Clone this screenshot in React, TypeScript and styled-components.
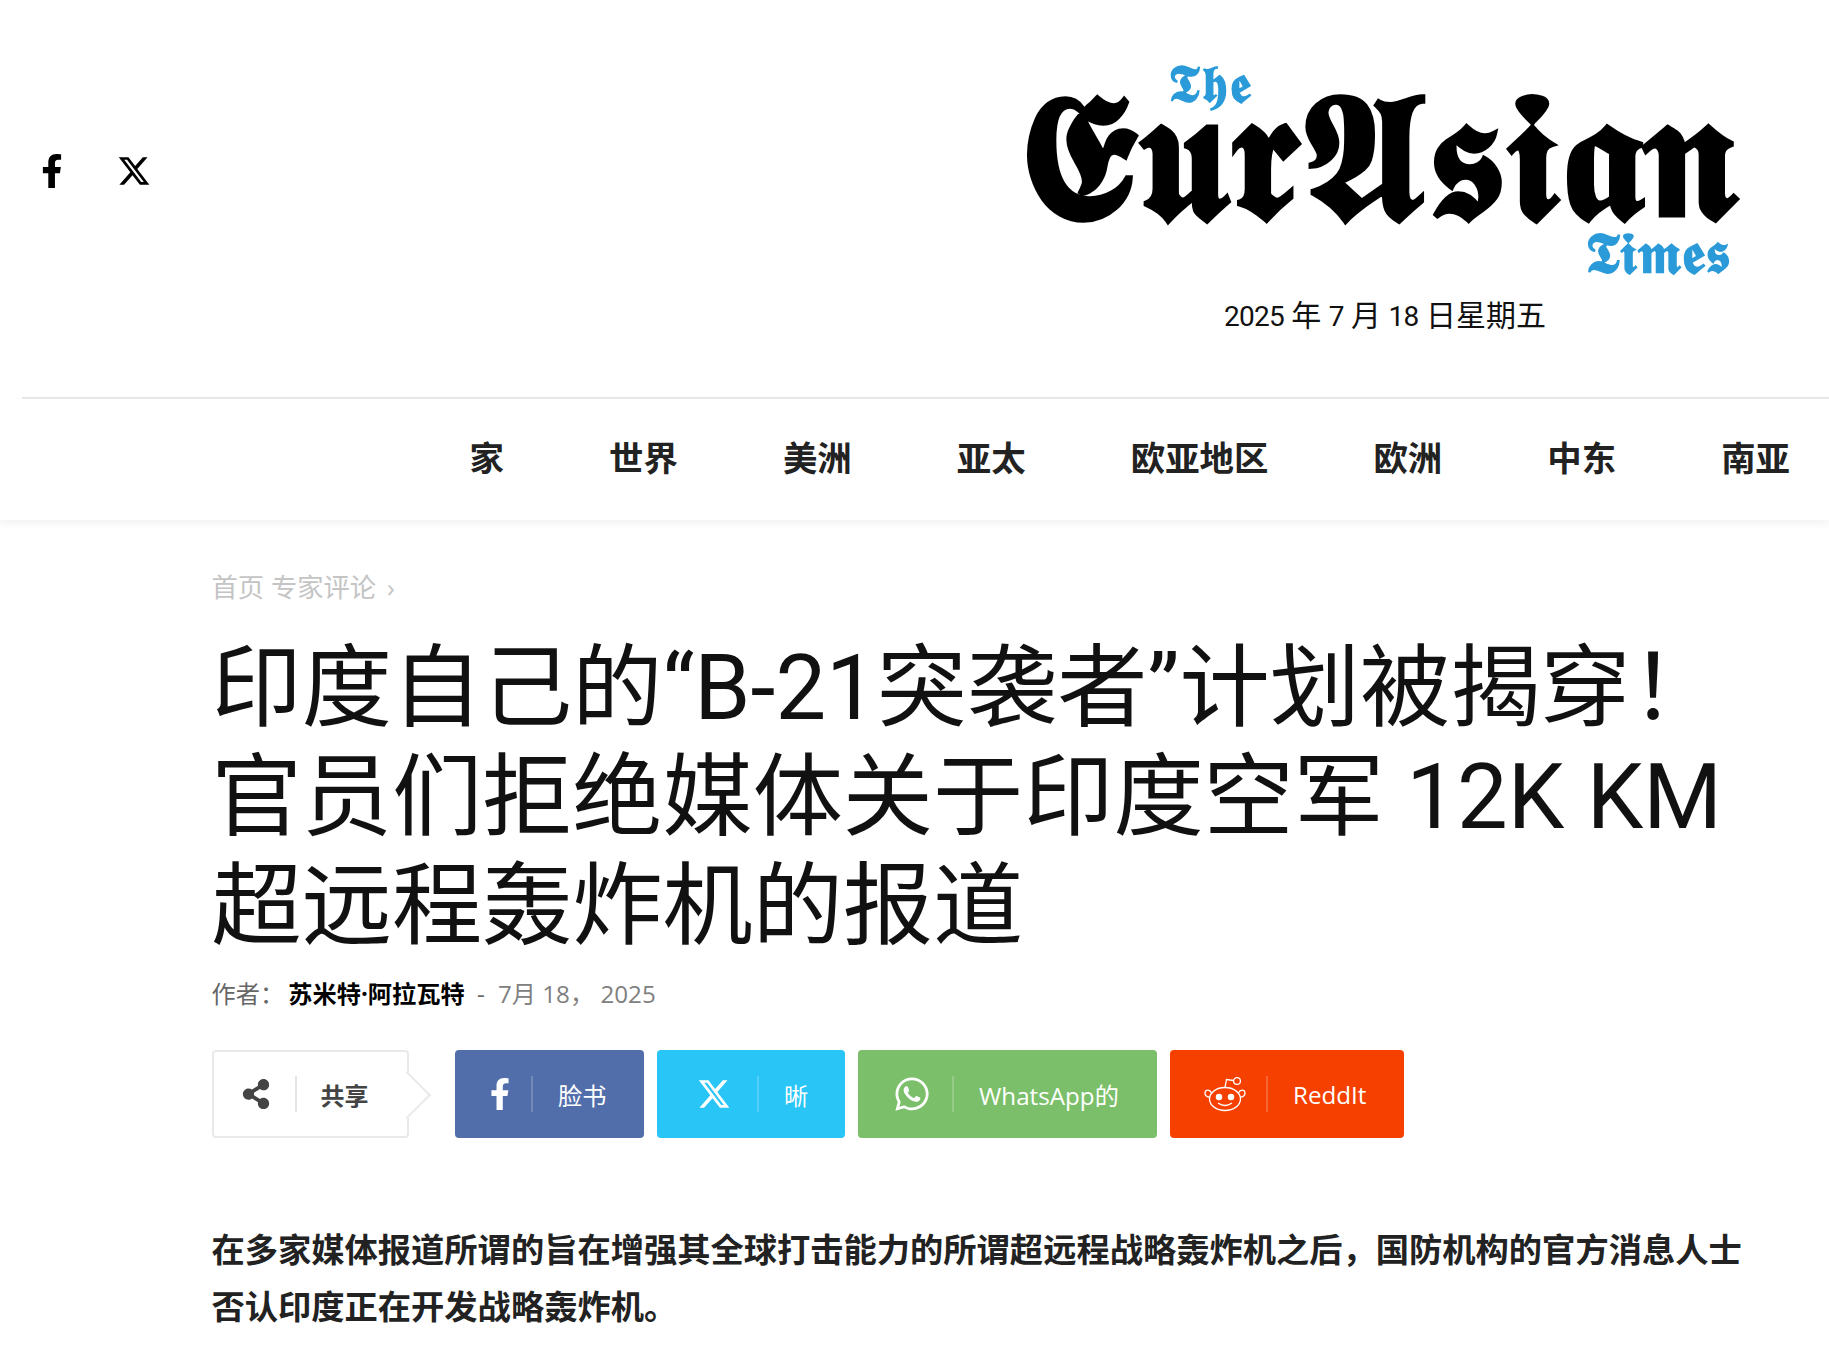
import React from 'react';
import styled, { createGlobalStyle } from 'styled-components';
import { FaFacebookF, FaShareAlt, FaWhatsapp } from 'react-icons/fa';
import { FaXTwitter } from 'react-icons/fa6';

const CJK = '"Noto Sans CJK SC", "Noto Sans CJK TC", sans-serif';

const navItems = ['家', '世界', '美洲', '亚太', '欧亚地区', '欧洲', '中东', '南亚'];

const GlobalStyle = createGlobalStyle`
	html, body {
		margin: 0;
		padding: 0;
		background: #fff;
		overflow-x: hidden;
	}
	* {
		box-sizing: border-box;
	}
`;

const RedditIcon = () => (
	<svg width="42" height="36" viewBox="0 0 42 36" fill="none" stroke="currentColor" strokeWidth="1.3">
		<ellipse cx="21" cy="23" rx="15.5" ry="11.5" />
		<path d="M7.5 17 C6 13.5 1.5 13 1 17 C0.8 19.5 3 21 5.8 21" />
		<path d="M34.5 17 C36 13.5 40.5 13 41 17 C41.2 19.5 39 21 36.2 21" />
		<path d="M21 11.5 L22.5 3.5 L29.5 4.5" />
		<circle cx="33" cy="5" r="3.4" />
		<circle cx="15" cy="21" r="2.6" fill="currentColor" />
		<circle cx="27" cy="21" r="2.6" fill="currentColor" />
		<path d="M14 27 Q21 32 28 27" />
	</svg>
);

export default function App() {
	return (
		<Page>
			<GlobalStyle />
			<Header>
				<Socials>
					<SocialLink><FaFacebookF /></SocialLink>
					<SocialLink><FaXTwitter /></SocialLink>
				</Socials>
				<Masthead>
					<LogoThe>𝕿𝖍𝖊</LogoThe>
					<LogoMain>𝕰𝖚𝖗𝕬𝖘𝖎𝖆𝖓</LogoMain>
					<LogoTimes>𝕿𝖎𝖒𝖊𝖘</LogoTimes>
					<DateLine>
						<Num>2025</Num> 年 <Num>7</Num> 月 <Num>18</Num> 日星期五
					</DateLine>
				</Masthead>
			</Header>
			<Divider />
			<Nav>
				{navItems.map((item) => (
					<NavItem key={item}>{item}</NavItem>
				))}
			</Nav>
			<Article>
				<Breadcrumb>首页 专家评论 <Chevron>›</Chevron></Breadcrumb>
				<Title>印度自己的“B-21突袭者”计划被揭穿！官员们拒绝媒体关于印度空军 12K KM 超远程轰炸机的报道</Title>
				<Meta>
					作者： <Author>苏米特·阿拉瓦特</Author> <Dash>-</Dash> <MetaDate>7月 18， 2025</MetaDate>
				</Meta>
				<ShareRow>
					<ShareLabel>
						<FaShareAlt />
						<ShareRule />
						<span>共享</span>
					</ShareLabel>
					<ShareButton $bg="#516eab" $width={189} $iconWidth={78} $iconSize={32}>
						<IconSlot><FaFacebookF /></IconSlot>
						<ButtonText>脸书</ButtonText>
					</ShareButton>
					<ShareButton $bg="#29c5f6" $width={188} $iconWidth={102} $iconSize={34}>
						<IconSlot><FaXTwitter /></IconSlot>
						<ButtonText>晰</ButtonText>
					</ShareButton>
					<ShareButton $bg="#7bbf6a" $width={299} $iconWidth={96} $iconSize={38}>
						<IconSlot><FaWhatsapp /></IconSlot>
						<ButtonText>WhatsApp的</ButtonText>
					</ShareButton>
					<ShareButton $bg="#f54000" $width={234} $iconWidth={98} $iconSize={36}>
						<IconSlot><RedditIcon /></IconSlot>
						<ButtonText>ReddIt</ButtonText>
					</ShareButton>
				</ShareRow>
				<Lead>在多家媒体报道所谓的旨在增强其全球打击能力的所谓超远程战略轰炸机之后，国防机构的官方消息人士否认印度正在开发战略轰炸机。</Lead>
			</Article>
		</Page>
	);
}

const Page = styled.div`
	width: 1829px;
	height: 1354px;
	overflow: hidden;
	background: #fff;
	font-family: "Open Sans", ${CJK};
	color: #111;
`;

const Header = styled.header`
	display: flex;
	justify-content: space-between;
	height: 397px;
	padding: 60px 90px 0 35px;
`;

const Socials = styled.div`
	display: flex;
	align-items: center;
	gap: 48px;
	height: 222px;
`;

const SocialLink = styled.a`
	display: flex;
	font-size: 34px;
	color: #000;
`;

const Masthead = styled.div`
	display: flex;
	flex-direction: column;
	width: 720px;
`;

const logoFont = '"DejaVu Serif", "DejaVu Sans", "Liberation Serif", serif';

const LogoThe = styled.div`
	margin-left: 149px;
	height: 48px;
	font: 700 52px/48px ${logoFont};
	letter-spacing: 2px;
	color: #2a9bd8;
`;

const LogoMain = styled.div`
	height: 96px;
	font: 700 179px/96px ${logoFont};
	color: #000;
	white-space: nowrap;
`;

const LogoTimes = styled.div`
	align-self: flex-end;
	height: 50px;
	margin: 24px 9px 0 0;
	font: 700 57px/50px ${logoFont};
	color: #2a9bd8;
`;

const DateLine = styled.div`
	margin-top: 18px;
	padding-left: 12px;
	text-align: center;
	font-family: Roboto, ${CJK};
	font-size: 30px;
	line-height: 40px;
	color: #111;
`;

const Num = styled.span`
	font-size: 28px;
	letter-spacing: -0.8px;
`;

const Divider = styled.div`
	height: 2px;
	margin-left: 22px;
	background: #e8e8e8;
`;

const Nav = styled.nav`
	display: flex;
	justify-content: flex-end;
	align-items: center;
	gap: 105.1px;
	height: 121px;
	padding: 0 39px 7px 0;
	box-shadow: 0 4px 8px rgba(0, 0, 0, 0.05);
`;

const NavItem = styled.a`
	font-family: ${CJK};
	font-size: 34.4px;
	font-weight: 700;
	color: #222;
`;

const Article = styled.main`
	padding: 47px 84px 0 211.5px;
`;

const Breadcrumb = styled.div`
	font-size: 26.3px;
	line-height: 40px;
	color: #c4c4c4;
`;

const Chevron = styled.span`
	margin-left: 4px;
	font-size: 26px;
`;

const Title = styled.h1`
	margin: 27px 0 0;
	font-family: Roboto, ${CJK};
	font-size: 90.2px;
	font-weight: 400;
	line-height: 109px;
	color: #111;
`;

const Meta = styled.div`
	margin-top: 13px;
	font-size: 24.2px;
	line-height: 40px;
	color: #666;
`;

const Author = styled.span`
	margin-left: -2px;
	font-weight: 700;
	color: #000;
`;

const Dash = styled.span`
	margin: 0 7px 0 6px;
`;

const MetaDate = styled.span`
	color: #808080;
`;

const ShareRow = styled.div`
	display: flex;
	gap: 13px;
	margin-top: 36px;
	height: 88px;
`;

const ShareLabel = styled.div`
	position: relative;
	display: flex;
	align-items: center;
	width: 197px;
	margin-right: 33.5px;
	padding-left: 27px;
	border: 2px solid #e9e9e9;
	border-radius: 4px;
	font-size: 24px;
	font-weight: 700;
	color: #444;

	svg {
		font-size: 30px;
	}

	&::after {
		content: '';
		position: absolute;
		right: -17px;
		top: 26px;
		width: 32px;
		height: 32px;
		background: #fff;
		border-top: 2px solid #e9e9e9;
		border-right: 2px solid #e9e9e9;
		transform: rotate(45deg);
	}
`;

const ShareRule = styled.span`
	width: 2px;
	height: 36px;
	margin: 0 24px 0 24px;
	background: #e5e5e5;
`;

const ShareButton = styled.a<{ $bg: string; $width: number; $iconWidth: number; $iconSize: number }>`
	display: flex;
	align-items: center;
	width: ${(p) => p.$width}px;
	border-radius: 4px;
	background: ${(p) => p.$bg};
	color: #fff;

	> span:first-child {
		width: ${(p) => p.$iconWidth}px;
		font-size: ${(p) => p.$iconSize}px;
	}
`;

const IconSlot = styled.span`
	display: flex;
	justify-content: center;
	align-items: center;
	height: 36px;
	padding-left: 14px;
	border-right: 2px solid rgba(255, 255, 255, 0.2);
`;

const ButtonText = styled.span`
	margin-left: 25px;
	font-size: 24.2px;
`;

const Lead = styled.p`
	margin: 81px 0 0;
	font-family: ${CJK};
	font-size: 33.28px;
	font-weight: 700;
	line-height: 57px;
	color: #222;
`;
